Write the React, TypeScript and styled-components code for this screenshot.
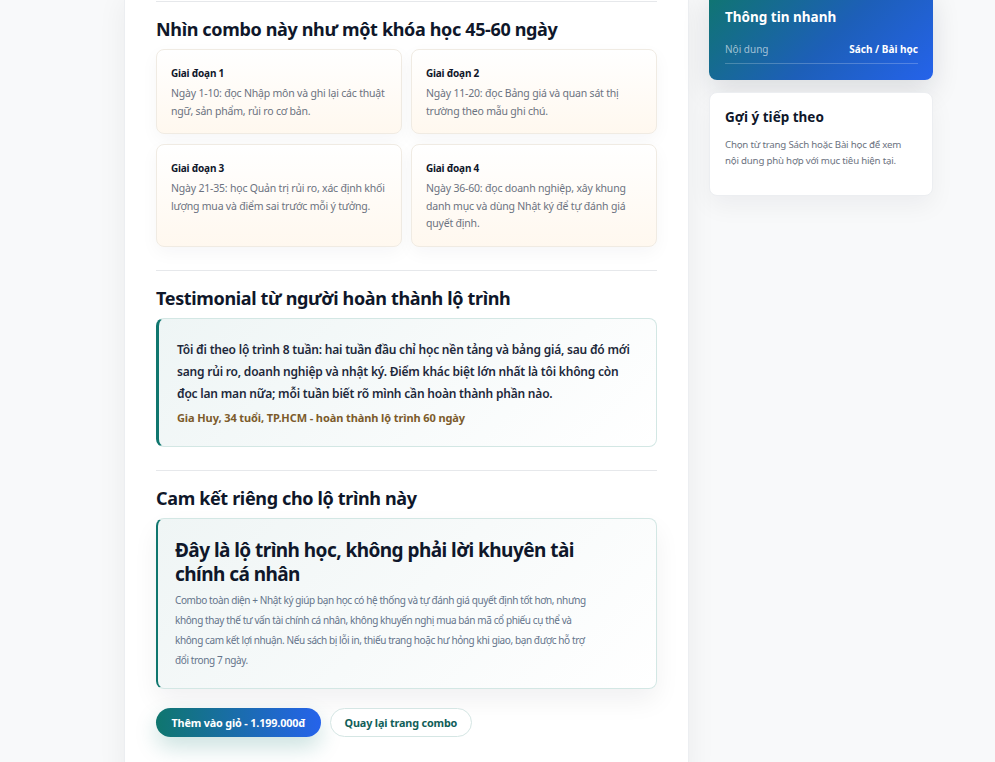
import styled, { createGlobalStyle } from 'styled-components';

const STAGES = [
  {
    id: '1',
    title: 'Giai đoạn 1',
    text: 'Ngày 1-10: đọc Nhập môn và ghi lại các thuật ngữ, sản phẩm, rủi ro cơ bản.',
  },
  {
    id: '2',
    title: 'Giai đoạn 2',
    text: 'Ngày 11-20: đọc Bảng giá và quan sát thị trường theo mẫu ghi chú.',
  },
  {
    id: '3',
    title: 'Giai đoạn 3',
    text: 'Ngày 21-35: học Quản trị rủi ro, xác định khối lượng mua và điểm sai trước mỗi ý tưởng.',
  },
  {
    id: '4',
    title: 'Giai đoạn 4',
    text: 'Ngày 36-60: đọc doanh nghiệp, xây khung danh mục và dùng Nhật ký để tự đánh giá quyết định.',
  },
];

function App() {
  return (
    <>
      <GlobalStyle />
      <StyledLayout>
        <StyledMain>
          <StyledSection>
            <StyledH2>Nhìn combo này như một khóa học 45-60 ngày</StyledH2>
            <StyledStageGrid>
              {STAGES.map((stage) => (
                <StyledStage key={stage.id}>
                  <StyledStageTitle>{stage.title}</StyledStageTitle>
                  <StyledStageText>{stage.text}</StyledStageText>
                </StyledStage>
              ))}
            </StyledStageGrid>
          </StyledSection>

          <StyledSection>
            <StyledH2>Testimonial từ người hoàn thành lộ trình</StyledH2>
            <StyledQuote>
              <StyledQuoteText>
                Tôi đi theo lộ trình 8 tuần: hai tuần đầu chỉ học nền tảng và bảng giá, sau đó
                mới sang rủi ro, doanh nghiệp và nhật ký. Điểm khác biệt lớn nhất là tôi không
                còn đọc lan man nữa; mỗi tuần biết rõ mình cần hoàn thành phần nào.
              </StyledQuoteText>
              <StyledQuoteAuthor>
                Gia Huy, 34 tuổi, TP.HCM - hoàn thành lộ trình 60 ngày
              </StyledQuoteAuthor>
            </StyledQuote>
          </StyledSection>

          <StyledSection>
            <StyledH2>Cam kết riêng cho lộ trình này</StyledH2>
            <StyledNotice>
              <StyledNoticeTitle>
                Đây là lộ trình học, không phải lời khuyên tài chính cá nhân
              </StyledNoticeTitle>
              <StyledNoticeText>
                Combo toàn diện + Nhật ký giúp bạn học có hệ thống và tự đánh giá quyết định
                tốt hơn, nhưng không thay thế tư vấn tài chính cá nhân, không khuyến nghị mua
                bán mã cổ phiếu cụ thể và không cam kết lợi nhuận. Nếu sách bị lỗi in, thiếu
                trang hoặc hư hỏng khi giao, bạn được hỗ trợ đổi trong 7 ngày.
              </StyledNoticeText>
            </StyledNotice>
            <StyledActions>
              <StyledButton variant="primary">Thêm vào giỏ - 1.199.000đ</StyledButton>
              <StyledButton variant="ghost">Quay lại trang combo</StyledButton>
            </StyledActions>
          </StyledSection>
        </StyledMain>

        <StyledAside>
          <StyledQuickInfo>
            <StyledQuickTitle>Thông tin nhanh</StyledQuickTitle>
            <StyledQuickRow>
              <StyledQuickLabel>Nội dung</StyledQuickLabel>
              <StyledQuickValue>Sách / Bài học</StyledQuickValue>
            </StyledQuickRow>
          </StyledQuickInfo>

          <StyledSideCard>
            <StyledSideTitle>Gợi ý tiếp theo</StyledSideTitle>
            <StyledSideText>
              Chọn từ trang Sách hoặc Bài học để xem nội dung phù hợp với mục tiêu hiện tại.
            </StyledSideText>
          </StyledSideCard>
        </StyledAside>
      </StyledLayout>
    </>
  );
}

export default App;

const GlobalStyle = createGlobalStyle({
  '*': { boxSizing: 'border-box' },
  body: {
    margin: 0,
    background: '#f8f9fa',
    fontFamily: '"Noto Sans", "Open Sans", sans-serif',
    color: '#0f172a',
    overflow: 'hidden',
  },
});

// page is shown scrolled a little past the top of both columns
const StyledLayout = styled('div')({
  display: 'grid',
  gridTemplateColumns: '565px 224px',
  columnGap: '20px',
  alignItems: 'start',
  paddingLeft: '124px',
  marginTop: '-11px',
});

const StyledMain = styled('main')({
  background: '#fff',
  border: '1px solid #eceef1',
  borderTop: 'none',
  borderRadius: '0 0 14px 14px',
  boxShadow: '0 10px 30px rgba(15, 23, 42, 0.06)',
  padding: '12px 31px 40px',
});

const StyledSection = styled('section')({
  borderTop: '1px solid #e6e8eb',
  paddingTop: '14px',
  '& + &': {
    marginTop: '23px',
  },
});

const StyledH2 = styled('h2')({
  margin: '0 0 7px',
  fontSize: '18px',
  lineHeight: '26px',
  fontWeight: 700,
  color: '#0f172a',
  letterSpacing: '-0.35px',
});

const StyledStageGrid = styled('div')({
  display: 'grid',
  gridTemplateColumns: '1fr 1fr',
  gap: '10px 9px',
});

const StyledStage = styled('div')({
  padding: '15px 14px 13px',
  background: 'linear-gradient(180deg, #ffffff 0%, #fff8ef 100%)',
  border: '1px solid #f0ebe3',
  borderRadius: '8px',
  boxShadow: '0 6px 18px rgba(15, 23, 42, 0.04)',
});

const StyledStageTitle = styled('div')({
  fontSize: '10px',
  lineHeight: '16px',
  fontWeight: 700,
  color: '#0f172a',
  letterSpacing: '-0.2px',
});

const StyledStageText = styled('p')({
  margin: '4px 0 0',
  fontSize: '10.5px',
  lineHeight: '17.5px',
  color: '#6b7280',
  letterSpacing: '-0.2px',
});

const StyledQuote = styled('blockquote')({
  margin: 0,
  padding: '20px 18px 19px',
  background: 'linear-gradient(135deg, #eef5f5 0%, #ffffff 100%)',
  border: '1px solid #d3e7e4',
  borderLeft: '3px solid #0f766e',
  borderRadius: '8px',
});

const StyledQuoteText = styled('p')({
  margin: 0,
  fontSize: '12px',
  lineHeight: '22px',
  fontWeight: 600,
  color: '#1e293b',
  letterSpacing: '-0.2px',
});

const StyledQuoteAuthor = styled('div')({
  marginTop: '4px',
  fontSize: '11px',
  lineHeight: '18px',
  fontWeight: 700,
  color: '#7c5b2b',
  letterSpacing: '-0.1px',
});

const StyledNotice = styled('div')({
  padding: '19px 17px 18px',
  background: 'linear-gradient(135deg, #eff5f5 0%, #ffffff 100%)',
  border: '1px solid #d3e7e4',
  borderLeft: '2px solid #0f766e',
  borderRadius: '8px',
  boxShadow: '0 12px 26px rgba(15, 23, 42, 0.06)',
});

const StyledNoticeTitle = styled('h3')({
  maxWidth: '420px',
  margin: 0,
  fontSize: '19px',
  lineHeight: '24px',
  fontWeight: 700,
  color: '#0f172a',
  letterSpacing: '-0.55px',
});

const StyledNoticeText = styled('p')({
  maxWidth: '422px',
  margin: '4px 0 0',
  fontSize: '10px',
  lineHeight: '20px',
  color: '#64748b',
  letterSpacing: '-0.4px',
});

const StyledActions = styled('div')({
  display: 'flex',
  gap: '9px',
  marginTop: '19px',
});

const StyledButton = styled('button')<{ variant: 'primary' | 'ghost' }>(
  ({ variant }) => ({
    height: '29px',
    padding: '0 15.5px',
    borderRadius: '999px',
    fontFamily: 'inherit',
    fontSize: '10.8px',
    fontWeight: 700,
    letterSpacing: '-0.15px',
    cursor: 'pointer',
    ...(variant === 'primary'
      ? {
          border: 'none',
          color: '#fff',
          background: 'linear-gradient(90deg, #0f766e 0%, #2563eb 100%)',
          boxShadow: '0 10px 22px rgba(15, 118, 110, 0.22)',
        }
      : {
          border: '1px solid #d5e6e4',
          color: '#115e59',
          background: '#fff',
          padding: '0 14px',
        }),
  }),
);

const StyledAside = styled('aside')({
  display: 'flex',
  flexDirection: 'column',
  gap: '12px',
});

const StyledQuickInfo = styled('div')({
  padding: '18px 15px 16px 16px',
  borderRadius: '0 0 8px 8px',
  background: 'linear-gradient(135deg, #0f766e 0%, #1d5fb8 55%, #2563eb 100%)',
  boxShadow: '0 12px 28px rgba(15, 23, 42, 0.12)',
  color: '#fff',
});

const StyledQuickTitle = styled('div')({
  fontSize: '13.5px',
  lineHeight: '20px',
  fontWeight: 700,
});

const StyledQuickRow = styled('div')({
  display: 'flex',
  justifyContent: 'space-between',
  alignItems: 'center',
  marginTop: '15px',
  paddingBottom: '7px',
  borderBottom: '1px solid rgba(255, 255, 255, 0.22)',
  fontSize: '10px',
  lineHeight: '14px',
});

const StyledQuickLabel = styled('span')({
  color: 'rgba(255, 255, 255, 0.6)',
});

const StyledQuickValue = styled('span')({
  fontWeight: 700,
});

const StyledSideCard = styled('div')({
  padding: '14px 15px 26px',
  background: '#fff',
  border: '1px solid #eceef1',
  borderRadius: '8px',
  boxShadow: '0 10px 24px rgba(15, 23, 42, 0.05)',
});

const StyledSideTitle = styled('div')({
  fontSize: '13.5px',
  lineHeight: '20px',
  fontWeight: 700,
  color: '#0f172a',
});

const StyledSideText = styled('p')({
  margin: '10px 0 0',
  fontSize: '9.7px',
  lineHeight: '16px',
  color: '#6b7280',
  letterSpacing: '-0.2px',
});
